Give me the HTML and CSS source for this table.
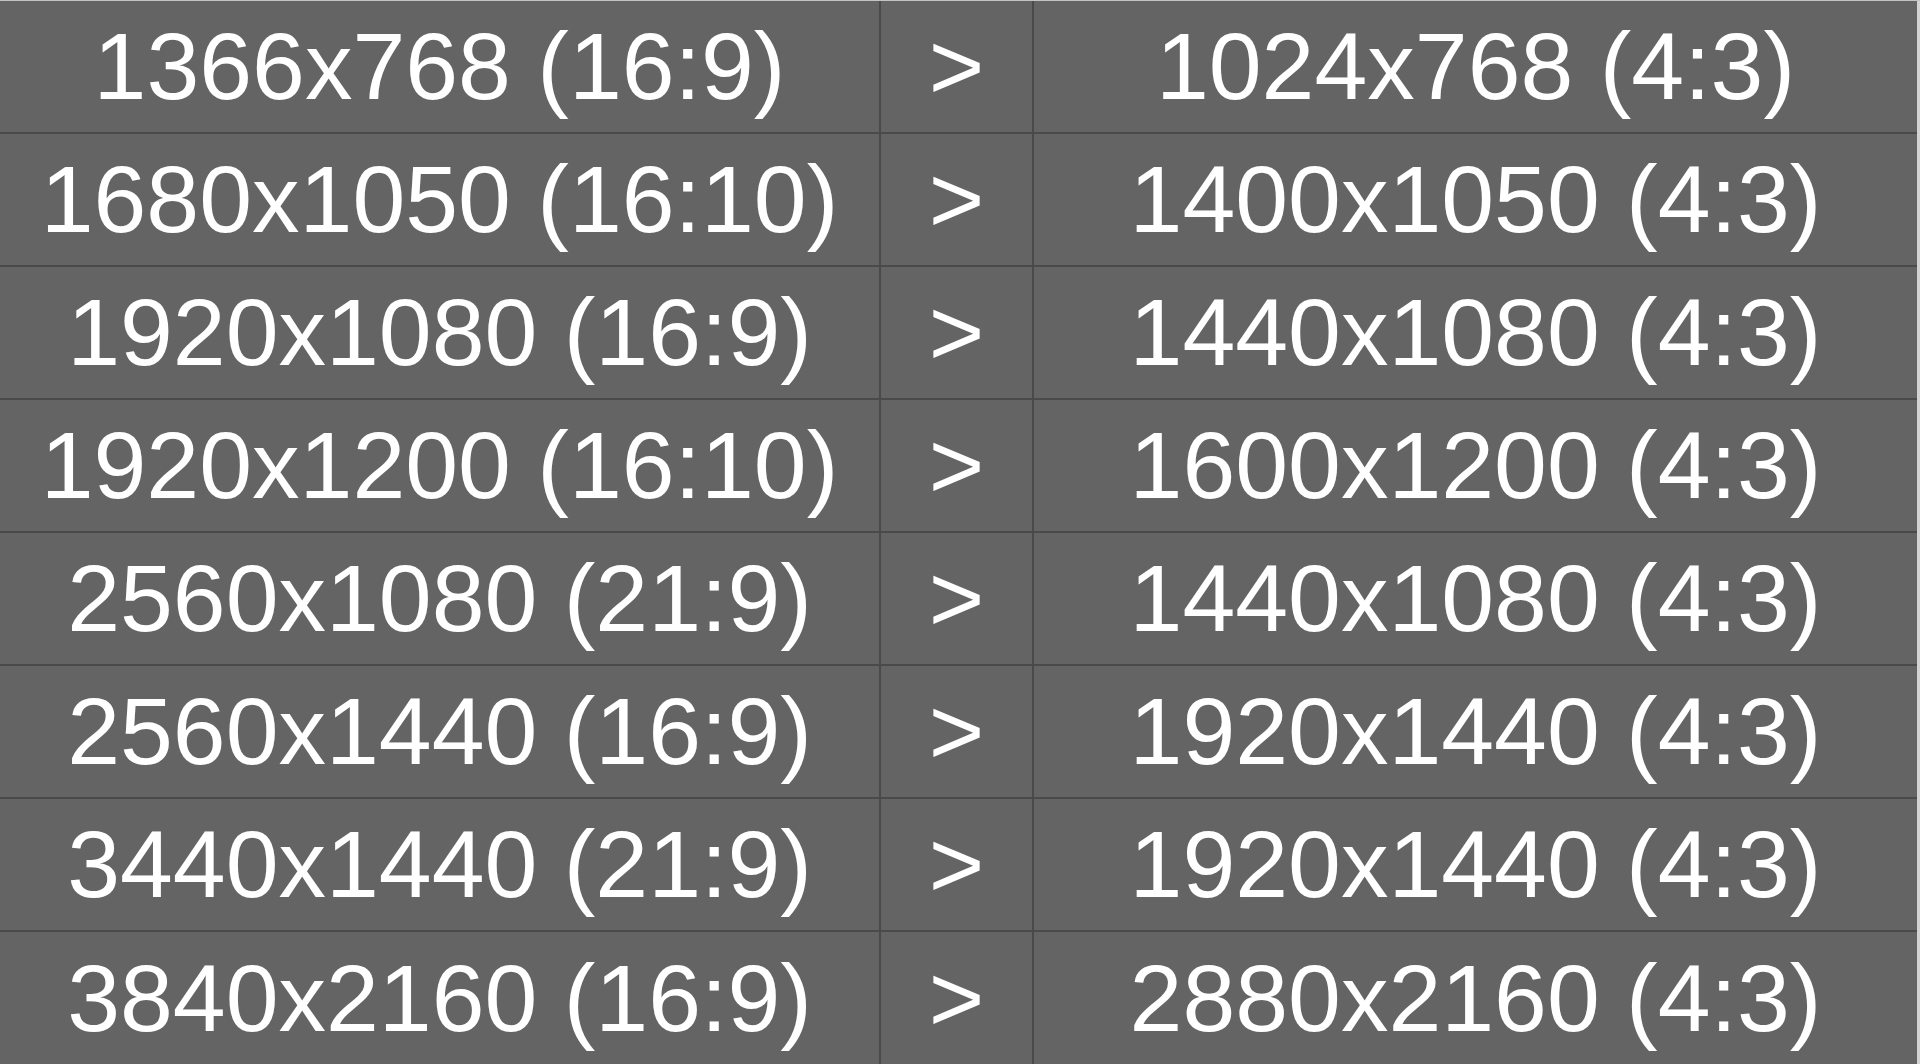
FILE: index.html
```html
<!DOCTYPE html>
<html>
<head>
    <title>Resolutions</title>
    <link rel="stylesheet" href="styles.css">
</head>
<body>
    <div class="frame">
        <div class="res-table">
            <div class="cell">1366x768 (16:9)</div>
            <div class="cell arrow">&gt;</div>
            <div class="cell">1024x768 (4:3)</div>

            <div class="cell">1680x1050 (16:10)</div>
            <div class="cell arrow">&gt;</div>
            <div class="cell">1400x1050 (4:3)</div>

            <div class="cell">1920x1080 (16:9)</div>
            <div class="cell arrow">&gt;</div>
            <div class="cell">1440x1080 (4:3)</div>

            <div class="cell">1920x1200 (16:10)</div>
            <div class="cell arrow">&gt;</div>
            <div class="cell">1600x1200 (4:3)</div>

            <div class="cell">2560x1080 (21:9)</div>
            <div class="cell arrow">&gt;</div>
            <div class="cell">1440x1080 (4:3)</div>

            <div class="cell">2560x1440 (16:9)</div>
            <div class="cell arrow">&gt;</div>
            <div class="cell">1920x1440 (4:3)</div>

            <div class="cell">3440x1440 (21:9)</div>
            <div class="cell arrow">&gt;</div>
            <div class="cell">1920x1440 (4:3)</div>

            <div class="cell">3840x2160 (16:9)</div>
            <div class="cell arrow">&gt;</div>
            <div class="cell">2880x2160 (4:3)</div>
        </div>
        <div class="edge"></div>
    </div>
</body>
</html>
```
FILE: styles.css
```css
html, body {
    margin: 0;
    padding: 0;
    background-color: #646464;
    overflow: hidden;
}
.frame {
    display: flex;
    height: 1064px;
    border-top: 1px solid #c4c4c4;
    box-sizing: border-box;
}
.res-table {
    display: grid;
    grid-template-columns: 879px 151px 883px;
    grid-template-rows: repeat(7, 131px) 132px;
    gap: 2px;
    background-color: #4a4a4a;
    width: 1917px;
    align-content: start;
}
.res-table .cell {
    display: flex;
    align-items: center;
    justify-content: center;
    background-color: #646464;
    color: #ffffff;
    font-family: "Liberation Sans", Arial, sans-serif;
    font-size: 95px;
    white-space: nowrap;
}
.edge {
    width: 3px;
    background-color: #d2d2d2;
}
```
